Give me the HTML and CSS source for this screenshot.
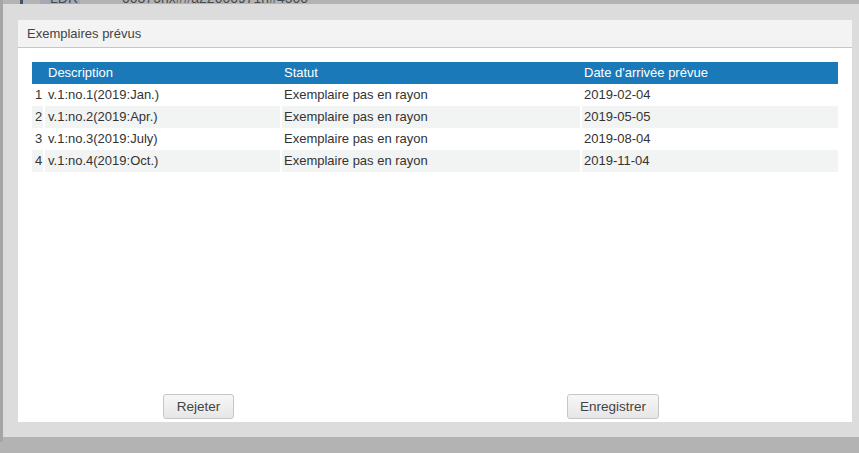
FILE: index.html
```html
<!DOCTYPE html>
<html lang="fr">
<head>
<meta charset="utf-8">
<title>Exemplaires prévus</title>
<link rel="stylesheet" href="styles.css">
</head>
<body>
<div class="page">
  <div class="bg-row">
    <span class="bg-bar"></span>
    <span class="bg-tag">LDR</span>
    <span class="bg-val">00375nx##a22000971n#4500</span>
  </div>
</div>
<div class="dialog">
  <div class="panel">
    <div class="panel-head">Exemplaires prévus</div>
    <div class="panel-body">
      <div class="table">
        <div class="row head">
          <div class="cell"></div>
          <div class="cell">Description</div>
          <div class="cell">Statut</div>
          <div class="cell">Date d'arrivée prévue</div>
        </div>
        <div class="row">
          <div class="cell num">1</div>
          <div class="cell">v.1:no.1(2019:Jan.)</div>
          <div class="cell">Exemplaire pas en rayon</div>
          <div class="cell">2019-02-04</div>
        </div>
        <div class="row alt">
          <div class="cell num">2</div>
          <div class="cell">v.1:no.2(2019:Apr.)</div>
          <div class="cell">Exemplaire pas en rayon</div>
          <div class="cell">2019-05-05</div>
        </div>
        <div class="row">
          <div class="cell num">3</div>
          <div class="cell">v.1:no.3(2019:July)</div>
          <div class="cell">Exemplaire pas en rayon</div>
          <div class="cell">2019-08-04</div>
        </div>
        <div class="row alt">
          <div class="cell num">4</div>
          <div class="cell">v.1:no.4(2019:Oct.)</div>
          <div class="cell">Exemplaire pas en rayon</div>
          <div class="cell">2019-11-04</div>
        </div>
      </div>
      <div class="actions">
        <button class="btn btn-reject" type="button">Rejeter</button>
        <button class="btn btn-save" type="button">Enregistrer</button>
      </div>
    </div>
  </div>
</div>
</body>
</html>
```

FILE: styles.css
```css
html, body {
  margin: 0;
  padding: 0;
}
body {
  width: 859px;
  height: 453px;
  overflow: hidden;
  position: relative;
  background: #b3b3b3;
  font-family: "Liberation Sans", Arial, sans-serif;
  font-size: 13px;
  color: #333;
}
.page {
  height: 453px;
  border-left: 3px solid #a5a5a5;
  box-sizing: border-box;
}
.bg-row {
  display: flex;
  align-items: center;
  height: 18px;
  margin-top: -11px;
  color: #4a4a4a;
  font-size: 14px;
}
.bg-bar {
  width: 3px;
  height: 18px;
  background: #3f5468;
  margin-left: 17px;
}
.bg-tag {
  width: 40px;
  height: 18px;
  line-height: 18px;
  margin-left: 17px;
  padding-left: 10px;
  box-sizing: border-box;
  background: #a4a9b2;
}
.bg-val {
  margin-left: 42px;
}
.dialog {
  position: absolute;
  left: 3px;
  top: 4px;
  width: 864px;
  height: 433px;
  box-sizing: border-box;
  padding: 16px 15px 15px 15px;
  background: #dcdcdc;
}
.panel {
  width: 834px;
  height: 402px;
  background: #fff;
  display: flex;
  flex-direction: column;
}
.panel-head {
  height: 27px;
  line-height: 27px;
  padding-left: 9px;
  background: #f3f3f3;
  border-bottom: 1px solid #c6c6c6;
  color: #444;
  font-size: 13px;
}
.panel-body {
  flex: 1;
  display: flex;
  flex-direction: column;
  padding: 14px 14px 3px 14px;
}
.table {
  display: flex;
  flex-direction: column;
}
.row {
  display: grid;
  grid-template-columns: 11px 235px 298px 256px;
  column-gap: 2px;
  height: 22px;
  line-height: 22px;
}
.row.head {
  background: #1a79b8;
  color: #fff;
}
.cell {
  padding-left: 2px;
  white-space: nowrap;
  overflow: visible;
}
.row .cell:nth-child(2) {
  padding-left: 3px;
}
.cell.num {
  padding-left: 3px;
}
.row.alt .cell {
  background: #f2f3f3;
}
.actions {
  margin-top: auto;
  display: flex;
  gap: 333px;
  padding-left: 131px;
}
.btn {
  height: 25px;
  border: 1px solid #c6c6c6;
  border-radius: 3px;
  background: linear-gradient(#f7f7f7, #e6e6e6);
  color: #444;
  font-family: "Liberation Sans", Arial, sans-serif;
  font-size: 13.5px;
  padding: 0;
  text-align: center;
}
.btn-reject {
  width: 71px;
}
.btn-save {
  width: 92px;
}
```
